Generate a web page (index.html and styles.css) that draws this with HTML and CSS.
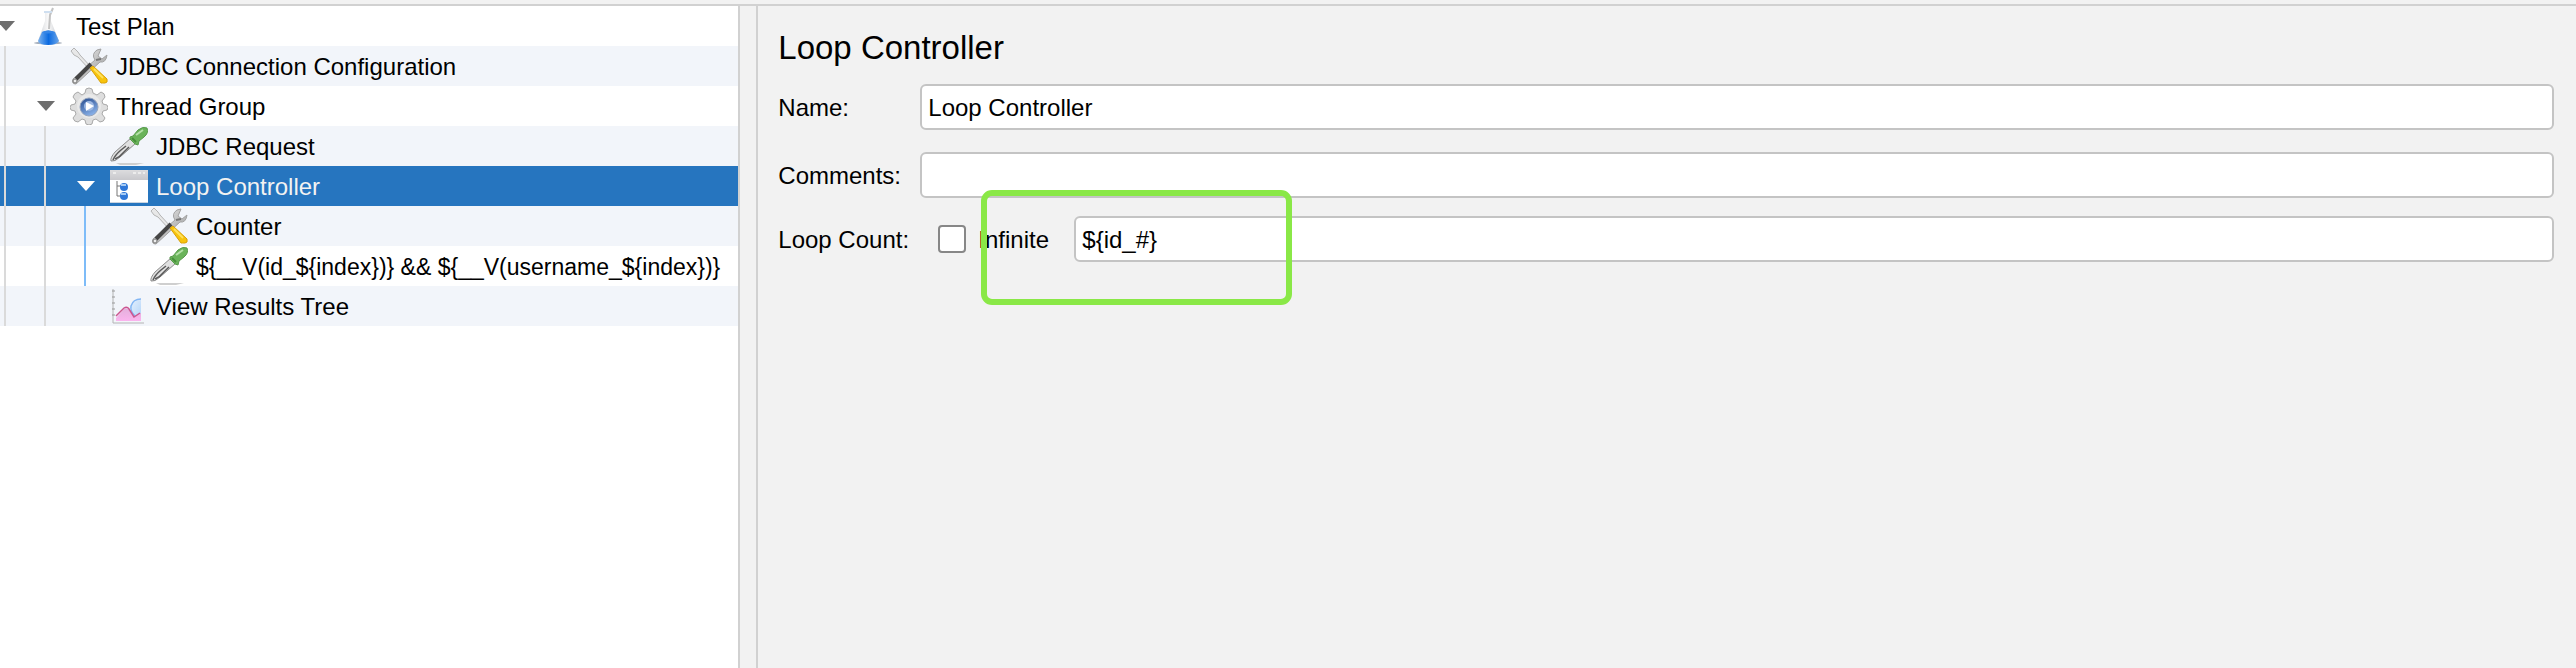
FILE: index.html
```html
<!DOCTYPE html>
<html lang="en">
<head>
    <meta charset="UTF-8">
    <meta name="viewport" content="width=device-width, initial-scale=1.0">
    <title>Test Plan - Loop Controller</title>
    <link rel="stylesheet" href="styles.css">
</head>
<body>
    <!-- Shared icons -->
    <svg class="sprite" aria-hidden="true">
        <defs>
            <linearGradient id="metal" x1="0" y1="0" x2="1" y2="1">
                <stop offset="0" stop-color="#f4f4f4"/>
                <stop offset="1" stop-color="#8f8f8f"/>
            </linearGradient>
            <linearGradient id="glass" x1="0" y1="0" x2="1" y2="0">
                <stop offset="0" stop-color="#d2d4d8"/>
                <stop offset="0.5" stop-color="#fafafa"/>
                <stop offset="1" stop-color="#c4c7cc"/>
            </linearGradient>
            <linearGradient id="liquid" x1="0" y1="0" x2="1" y2="0">
                <stop offset="0" stop-color="#7db4f0"/>
                <stop offset="0.5" stop-color="#0b6ae0"/>
                <stop offset="1" stop-color="#6ba6ea"/>
            </linearGradient>
            <linearGradient id="disc" x1="0" y1="0" x2="0.5" y2="1">
                <stop offset="0" stop-color="#24488a"/>
                <stop offset="1" stop-color="#86aee6"/>
            </linearGradient>
            <linearGradient id="bar" x1="0" y1="0" x2="0" y2="1">
                <stop offset="0" stop-color="#dcdcde"/>
                <stop offset="1" stop-color="#c8c8cc"/>
            </linearGradient>
            <linearGradient id="pink" x1="0" y1="0" x2="0" y2="1">
                <stop offset="0" stop-color="#e3b0dc"/>
                <stop offset="1" stop-color="#fbb4ee"/>
            </linearGradient>
            <linearGradient id="sky" x1="0" y1="0" x2="1" y2="1">
                <stop offset="0" stop-color="#e6f1fd"/>
                <stop offset="1" stop-color="#b3d4f8"/>
            </linearGradient>
        </defs>
        <symbol id="icon-flask" viewBox="0 0 38 38">
            <ellipse cx="18" cy="36" rx="14" ry="1.5" fill="#a4adba"/>
            <path d="M15 6h6v8l8 20q-2 4-11 4T8 34l7-20z" fill="url(#glass)"/>
            <path d="M12 25q6-3 13 0l4 9q-2 4-11 4T8 34z" fill="url(#liquid)"/>
            <path d="M12 25q6-3 13 0q-7 3-13 0z" fill="#3585e6"/>
            <path d="M19 22l1-14 3-7" fill="none" stroke="#c2c2c2" stroke-width="2"/>
            <path d="M14 5h8" stroke="#cfdff0" stroke-width="2"/>
        </symbol>
        <symbol id="icon-tools" viewBox="0 0 38 38">
            <path d="M1 4l3-3 4 4 2 3 11 12-2 2L8 10 4 8z" fill="#e8e8e8" stroke="#b4b4b4"/>
            <path d="M27 3q-6 4-2 10L3 32q-2 5 3 5l24-22q6 1 7-7l-5 4-4-3 3-7z" fill="url(#metal)" stroke="#a2a2a2"/>
            <path d="M6 32l15-15" stroke="#454545" stroke-width="4"/>
            <path d="M26 13l5-1" stroke="#777" stroke-width="2"/>
            <circle cx="5" cy="34" r="2" fill="#eee" stroke="#777"/>
            <path d="M20 21l3-2 14 13q1 4-2 4t-4 0z" fill="#f7c30c" stroke="#d9a008"/>
            <path d="M24 22l9 9" stroke="#ffe15a" stroke-width="2"/>
        </symbol>
        <symbol id="icon-gear" viewBox="0 0 38 38">
            <path d="M15 6l1-4q3-2 6 0l1 4 4 2 4-3q4 1 4 5l-3 4 1 3 4 1q2 3 0 5l-4 1-1 3 3 4q-1 4-5 4l-4-3-3 1-1 4q-3 2-6 0l-1-4-3-1-4 3q-4 0-5-4l3-4-1-3-4-1q-2-3 0-5l4-1 1-3-3-4q1-4 5-5l4 3z" fill="#dedede" stroke="#a9a9a9"/>
            <circle cx="19" cy="19" r="12" fill="#e9e9e9"/>
            <circle cx="19" cy="20" r="9" fill="url(#disc)" stroke="#93a3bd"/>
            <circle cx="19" cy="19" r="5" fill="#9db8e2"/>
            <path d="M16 15l8 4-8 5z" fill="#fff"/>
        </symbol>
        <symbol id="icon-dropper" viewBox="0 0 38 38">
            <path d="M6 36h28l-8 2H10z" fill="#cfcfcf"/>
            <path d="M1 34q-1-3 4-9l16-14 5 5L10 30q-5 5-9 4z" fill="#e0e0e0" stroke="#8b8b8b"/>
            <path d="M3 33q2-5 8-10l5-4M5 32q5-2 9-7l5-5" stroke="#5a5a5a" fill="none" stroke-width="1.5"/>
            <path d="M20 10l3-1 5-6q5-4 9-2 2 5-3 9l-5 4-1 4-3-1-5-5z" fill="#6ab35a" stroke="#579a4a"/>
            <path d="M26 8l7-5" stroke="#b5e0a8" stroke-width="2"/>
            <path d="M22 11l4 4" stroke="#478f3a" stroke-width="2"/>
        </symbol>
        <symbol id="icon-window" viewBox="0 0 38 38">
            <path d="M0 3h38v33H0z" fill="#fff"/>
            <path d="M0 3h38v10H0z" fill="url(#bar)"/>
            <path d="M0 35h38v1H0z" fill="#c9d4e0"/>
            <path d="M3 6h3m17 0h3m2 0h3m2 0h2" stroke="#ececec" stroke-width="2"/>
            <path d="M7 14v15h4M7 19h4" stroke="#777" fill="none"/>
            <circle cx="14" cy="20" r="4" fill="#2f78d8"/>
            <circle cx="14" cy="29" r="4" fill="#2f78d8"/>
            <path d="M11 18h5m-5 9h5" stroke="#a5cbf5" stroke-width="2"/>
        </symbol>
        <symbol id="icon-chart" viewBox="0 0 38 38">
            <path d="M20 22q1-9 11-9v16l-5 2z" fill="url(#sky)"/>
            <path d="M31 12q-8 0-10 7-1 5 4 10" fill="none" stroke="#82b6f4" stroke-width="1.5"/>
            <path d="M6 31l8-9q3-2 5 1l5 7 7-4v8H6z" fill="url(#pink)"/>
            <path d="M6 29l8-8q3-2 5 1l5 8 6-4" fill="none" stroke="#cc5590" stroke-width="1.5"/>
            <path d="M3 2v34h31" fill="none" stroke="#b4b4b4"/>
            <path d="M2 4h3M2 10h3M2 16h3M2 22h3M2 28h3" stroke="#999"/>
        </symbol>
        <symbol id="icon-arrow" viewBox="0 0 18 10">
            <path d="M0 0h18L9 10z" fill="currentColor"/>
        </symbol>
    </svg>

    <div class="app">
        <div class="top-strip"></div>
        <div class="split">
            <nav class="tree-pane" aria-label="Test plan tree">
                <ul class="tree">
                    <li class="row">
                        <button class="toggle" type="button" aria-label="Collapse Test Plan"><svg><use href="#icon-arrow"/></svg></button>
                        <svg class="icon"><use href="#icon-flask"/></svg>
                        <span class="node-name">Test Plan</span>
                    </li>
                    <li class="row">
                        <i class="guide"></i>
                        <span class="toggle"></span>
                        <svg class="icon"><use href="#icon-tools"/></svg>
                        <span class="node-name">JDBC Connection Configuration</span>
                    </li>
                    <li class="row">
                        <i class="guide"></i>
                        <button class="toggle" type="button" aria-label="Collapse Thread Group"><svg><use href="#icon-arrow"/></svg></button>
                        <svg class="icon"><use href="#icon-gear"/></svg>
                        <span class="node-name">Thread Group</span>
                    </li>
                    <li class="row">
                        <i class="guide"></i><i class="guide"></i>
                        <span class="toggle"></span>
                        <svg class="icon"><use href="#icon-dropper"/></svg>
                        <span class="node-name">JDBC Request</span>
                    </li>
                    <li class="row selected">
                        <i class="guide"></i><i class="guide"></i>
                        <button class="toggle" type="button" aria-label="Collapse Loop Controller"><svg><use href="#icon-arrow"/></svg></button>
                        <svg class="icon"><use href="#icon-window"/></svg>
                        <span class="node-name">Loop Controller</span>
                    </li>
                    <li class="row">
                        <i class="guide"></i><i class="guide"></i><i class="guide active"></i>
                        <span class="toggle"></span>
                        <svg class="icon"><use href="#icon-tools"/></svg>
                        <span class="node-name">Counter</span>
                    </li>
                    <li class="row">
                        <i class="guide"></i><i class="guide"></i><i class="guide active"></i>
                        <span class="toggle"></span>
                        <svg class="icon"><use href="#icon-dropper"/></svg>
                        <span class="node-name expression">${__V(id_${index})} &amp;&amp; ${__V(username_${index})}</span>
                    </li>
                    <li class="row">
                        <i class="guide"></i><i class="guide"></i>
                        <span class="toggle"></span>
                        <svg class="icon"><use href="#icon-chart"/></svg>
                        <span class="node-name">View Results Tree</span>
                    </li>
                </ul>
            </nav>
            <div class="divider"></div>
            <main class="editor">
                <h1>Loop Controller</h1>
                <form>
                    <div class="field">
                        <label class="field-label" for="name">Name:</label>
                        <input class="text-input" type="text" id="name" value="Loop Controller">
                    </div>
                    <div class="field">
                        <label class="field-label" for="comments">Comments:</label>
                        <input class="text-input" type="text" id="comments">
                    </div>
                    <div class="field loop-field">
                        <label class="loop-label" for="loops">Loop Count:</label>
                        <input class="checkbox" type="checkbox" id="infinite">
                        <label class="infinite-label" for="infinite">Infinite</label>
                        <input class="text-input" type="text" id="loops" value="${id_#}">
                        <div class="highlight"></div>
                    </div>
                </form>
            </main>
        </div>
    </div>
</body>
</html>
```
FILE: styles.css
```css
:root {
    --bg-color: #f2f2f2;
    --line-color: #d1d1d1;
    --input-border: #c4c4c4;
    --stripe-color: #f2f5fa;
    --selected-color: #2675bf;
    --highlight-color: #8ae847;
}

* {
    box-sizing: border-box;
}

body {
    margin: 0;
    font-family: "Liberation Sans", Arial, sans-serif;
    font-size: 24px;
    line-height: 28px;
    color: #000;
    background-color: var(--bg-color);
}

.sprite {
    position: absolute;
    width: 0;
    height: 0;
}

.app {
    display: flex;
    flex-direction: column;
    min-height: 100vh;
}

.top-strip {
    height: 6px;
    border-bottom: 2px solid var(--line-color);
}

.split {
    display: flex;
    flex: 1;
}

/* Tree */
.tree-pane {
    flex: 0 0 auto;
    background-color: #fff;
}

.tree {
    list-style: none;
    margin: 0;
    padding: 0;
}

.row {
    display: flex;
    align-items: center;
    height: 40px;
    padding-right: 18px;
    white-space: nowrap;
}

.row:nth-child(even) {
    background-color: var(--stripe-color);
}

/* the row above the selection and the one below it are both striped */
.row.selected {
    background-color: var(--selected-color);
    color: #f2f2f2;
}

.guide {
    align-self: stretch;
    width: 36px;
    margin-left: 4px;
    border-left: 2px solid #dadada;
}

.guide.active {
    border-color: #7ebcf8;
}

.toggle {
    display: flex;
    align-items: center;
    justify-content: center;
    width: 30px;
    height: 40px;
    margin-right: 2px;
    margin-left: -2px;
    padding: 0 14px 0 0;
    border: none;
    background: none;
    color: #6e6e6e;
    cursor: pointer;
}

.toggle svg {
    flex: none;
    width: 18px;
    height: 10px;
}

.selected .toggle {
    color: #fff;
}

.icon {
    flex: none;
    width: 38px;
    height: 38px;
    margin-right: 8px;
}

.node-name {
    padding-top: 2px;
}

.expression {
    font-size: 23px;
}

/* Splitter between the tree and the editor */
.divider {
    flex: 0 0 20px;
    border-left: 2px solid var(--line-color);
    border-right: 2px solid var(--line-color);
}

/* Editor */
.editor {
    flex: 1;
    padding: 22px 22px 20px 20px;
}

h1 {
    margin: 0 0 16px;
    font-size: 33px;
    font-weight: normal;
    line-height: 40px;
}

.field {
    display: flex;
    align-items: center;
    margin-bottom: 22px;
}

.field-label {
    flex: 0 0 142px;
    padding-top: 2px;
}

.text-input {
    flex: 1;
    min-width: 0;
    height: 46px;
    padding: 2px 6px 0;
    border: 2px solid var(--input-border);
    border-radius: 6px;
    background-color: #fff;
    color: #000;
    font: inherit;
}

.loop-field {
    position: relative;
    margin-top: -4px;
}

.loop-label {
    flex: 0 0 160px;
    padding-top: 2px;
}

.checkbox {
    appearance: none;
    width: 28px;
    height: 28px;
    margin: 0 12px 0 0;
    border: 2px solid #878787;
    border-radius: 4px;
    background-color: #fff;
}

.infinite-label {
    flex: 0 0 96px;
    padding-top: 2px;
}

/* Callout frame around the loop count value */
.highlight {
    position: absolute;
    top: -26px;
    left: 203px;
    width: 311px;
    height: 115px;
    border: 6px solid var(--highlight-color);
    border-radius: 11px;
    pointer-events: none;
}
```
